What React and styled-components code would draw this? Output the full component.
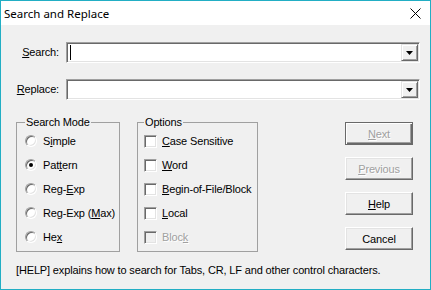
import React from "react";
import styled, { createGlobalStyle } from "styled-components";

const Global = createGlobalStyle`
  html, body { margin: 0; padding: 0; background: #f0f0f0; }
  body { font-family: "Liberation Sans", Arial, sans-serif; font-size: 11px; letter-spacing: -0.15px; color: #000; }
`;

const Window = styled.div`
  width: 431px;
  height: 290px;
  box-sizing: border-box;
  border: 1px solid #22aec4;
  background: #f0f0f0;
  display: flex;
  flex-direction: column;
`;

const TitleBar = styled.div`
  height: 24px;
  background: #fff;
  display: flex;
  align-items: center;
  justify-content: space-between;
  padding: 0 9px 0 3px;
  font-family: "Noto Sans", "Liberation Sans", sans-serif;
  font-size: 11.5px;
  letter-spacing: 0;
  color: #000;
`;

const Content = styled.div`
  display: flex;
  flex-direction: column;
  padding-top: 17px;
`;

const FieldRow = styled.div`
  display: flex;
  align-items: center;
  gap: 7px;
  margin-bottom: ${(p) => p.$mb || 0}px;
`;

const Label = styled.div`
  width: 58px;
  text-align: right;
  line-height: 13px;
`;

const Combo = styled.div`
  width: 354px;
  height: 21px;
  box-sizing: border-box;
  background: #fff;
  border: 1px solid;
  border-color: #a0a0a0 #fff #fff #a0a0a0;
  box-shadow: inset 1px 1px 0 #696969, inset -1px -1px 0 #e3e3e3;
  display: flex;
  align-items: stretch;
  justify-content: space-between;
  padding: 1px;
`;

const Caret = styled.span`
  width: 1px;
  height: 15px;
  background: #000;
  margin: 1px 0 0 2px;
`;

const DropBtn = styled.div`
  width: 17px;
  box-sizing: border-box;
  margin-left: auto;
  background: #f0f0f0;
  border: 1px solid;
  border-color: #e3e3e3 #696969 #696969 #e3e3e3;
  box-shadow: inset 1px 1px 0 #fff, inset -1px -1px 0 #a0a0a0;
  display: flex;
  align-items: center;
  justify-content: center;
`;

const Middle = styled.div`
  display: flex;
  align-items: flex-start;
  margin-top: 16px;
  padding-left: 15px;
`;

const Group = styled.fieldset`
  margin: 0 ${(p) => p.$mr || 0}px 0 0;
  padding: 0 0 2px ${(p) => p.$pl}px;
  width: ${(p) => p.$w}px;
  box-sizing: border-box;
  border: 1px solid #a0a0a0;
  min-width: 0;
`;

const Legend = styled.legend`
  padding: 0 1px;
  line-height: 13px;
`;

const Item = styled.label`
  display: flex;
  align-items: center;
  height: 24px;
  gap: ${(p) => p.$gap}px;
  color: ${(p) => (p.$disabled ? "#a0a0a0" : "#000")};
  text-shadow: ${(p) => (p.$disabled ? "1px 1px 0 #fff" : "none")};
`;

const Radio = styled.span`
  width: 12px;
  height: 12px;
  box-sizing: border-box;
  border-radius: 50%;
  border: 1px solid;
  border-color: #a0a0a0 #fff #fff #a0a0a0;
  box-shadow: inset 1px 1px 0 #696969, inset -1px -1px 0 #e3e3e3;
  background: #fff;
  display: flex;
  align-items: center;
  justify-content: center;
  &::after {
    content: "";
    width: 4px;
    height: 4px;
    border-radius: 50%;
    background: #000;
    display: ${(p) => (p.$checked ? "block" : "none")};
  }
`;

const Check = styled.span`
  width: 13px;
  height: 13px;
  box-sizing: border-box;
  border: 1px solid;
  border-color: #a0a0a0 #fff #fff #a0a0a0;
  box-shadow: inset 1px 1px 0 #696969, inset -1px -1px 0 #e3e3e3;
  background: ${(p) => (p.$disabled ? "#f0f0f0" : "#fff")};
`;

const U = styled.span`
  text-decoration: underline;
  text-underline-offset: 1px;
`;

const Buttons = styled.div`
  display: flex;
  flex-direction: column;
  gap: 12px;
  margin-left: 87px;
  margin-top: 6px;
`;

const Button = styled.button`
  width: 68px;
  height: 23px;
  box-sizing: border-box;
  padding: 0;
  font-family: "Liberation Sans", Arial, sans-serif;
  font-size: 11px;
  letter-spacing: -0.15px;
  background: #f0f0f0;
  border: 1px solid;
  border-color: ${(p) => (p.$default ? "#696969" : "#fff #696969 #696969 #fff")};
  box-shadow: ${(p) =>
    p.$default
      ? "inset 1px 1px 0 #fff, inset -1px -1px 0 #696969, inset -2px -2px 0 #a0a0a0"
      : "inset -1px -1px 0 #a0a0a0, inset 1px 1px 0 #e3e3e3"};
  color: ${(p) => (p.disabled ? "#a0a0a0" : "#000")};
  text-shadow: ${(p) => (p.disabled ? "1px 1px 0 #fff" : "none")};
`;

const Footer = styled.div`
  margin: 12px 0 0 15px;
  line-height: 13px;
`;

const modes = [
  ["S", "i", "mple"],
  ["Pat", "t", "ern"],
  ["Reg-", "E", "xp"],
  ["Reg-Exp (", "M", "ax)"],
  ["He", "x", ""],
];

const options = [
  ["", "C", "ase Sensitive"],
  ["", "W", "ord"],
  ["", "B", "egin-of-File/Block"],
  ["", "L", "ocal"],
  ["Bloc", "k", "", true],
];

function Arrow() {
  return (
    <svg width="7" height="4" viewBox="0 0 7 4">
      <path d="M0 0 H7 L3.5 4 Z" fill="#000" />
    </svg>
  );
}

export default function App() {
  return (
    <>
      <Global />
      <Window>
        <TitleBar>
          <span>Search and Replace</span>
          <svg width="11" height="11" viewBox="0 0 11 11">
            <path d="M0.5 0.5 L10.5 10.5 M10.5 0.5 L0.5 10.5" stroke="#000" strokeWidth="1" fill="none" />
          </svg>
        </TitleBar>
        <Content>
          <FieldRow $mb={16}>
            <Label>
              <U>S</U>earch:
            </Label>
            <Combo>
              <Caret />
              <DropBtn>
                <Arrow />
              </DropBtn>
            </Combo>
          </FieldRow>
          <FieldRow>
            <Label>
              <U>R</U>eplace:
            </Label>
            <Combo>
              <DropBtn>
                <Arrow />
              </DropBtn>
            </Combo>
          </FieldRow>
          <Middle>
            <Group $w={104} $pl={8} $mr={17}>
              <Legend>Search Mode</Legend>
              {modes.map(([a, u, b], i) => (
                <Item key={i} $gap={6}>
                  <Radio $checked={i === 1} />
                  <span>
                    {a}
                    <U>{u}</U>
                    {b}
                  </span>
                </Item>
              ))}
            </Group>
            <Group $w={121} $pl={6}>
              <Legend>Options</Legend>
              {options.map(([a, u, b, dis], i) => (
                <Item key={i} $gap={5} $disabled={dis}>
                  <Check $disabled={dis} />
                  <span>
                    {a}
                    <U>{u}</U>
                    {b}
                  </span>
                </Item>
              ))}
            </Group>
            <Buttons>
              <Button $default disabled>
                <U>N</U>ext
              </Button>
              <Button disabled>
                <U>P</U>revious
              </Button>
              <Button>
                <U>H</U>elp
              </Button>
              <Button>Cancel</Button>
            </Buttons>
          </Middle>
          <Footer>[HELP] explains how to search for Tabs, CR, LF and other control characters.</Footer>
        </Content>
      </Window>
    </>
  );
}
